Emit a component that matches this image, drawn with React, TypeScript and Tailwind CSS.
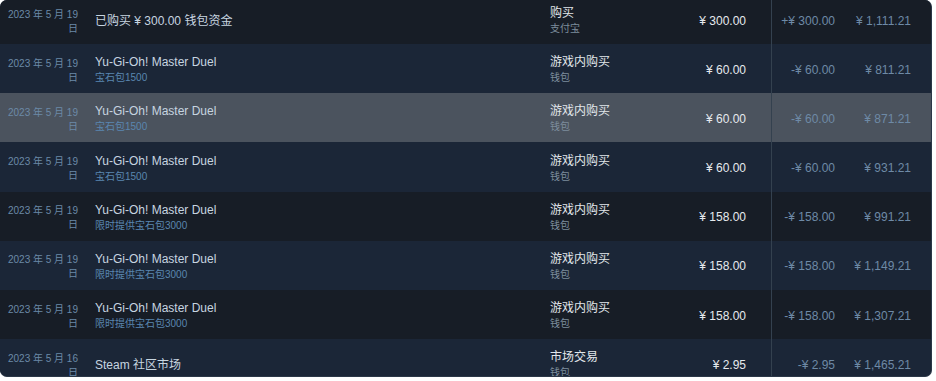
import React from "react";

type Row = {
  date: string;
  title: string;
  sub?: string;
  type: string;
  typeSub: string;
  total: string;
  change: string;
  balance: string;
};

const rows: Row[] = [
  { date: "2023 年 5 月 19 日", title: "已购买 ¥ 300.00 钱包资金", type: "购买", typeSub: "支付宝", total: "¥ 300.00", change: "+¥ 300.00", balance: "¥ 1,111.21" },
  { date: "2023 年 5 月 19 日", title: "Yu-Gi-Oh! Master Duel", sub: "宝石包1500", type: "游戏内购买", typeSub: "钱包", total: "¥ 60.00", change: "-¥ 60.00", balance: "¥ 811.21" },
  { date: "2023 年 5 月 19 日", title: "Yu-Gi-Oh! Master Duel", sub: "宝石包1500", type: "游戏内购买", typeSub: "钱包", total: "¥ 60.00", change: "-¥ 60.00", balance: "¥ 871.21" },
  { date: "2023 年 5 月 19 日", title: "Yu-Gi-Oh! Master Duel", sub: "宝石包1500", type: "游戏内购买", typeSub: "钱包", total: "¥ 60.00", change: "-¥ 60.00", balance: "¥ 931.21" },
  { date: "2023 年 5 月 19 日", title: "Yu-Gi-Oh! Master Duel", sub: "限时提供宝石包3000", type: "游戏内购买", typeSub: "钱包", total: "¥ 158.00", change: "-¥ 158.00", balance: "¥ 991.21" },
  { date: "2023 年 5 月 19 日", title: "Yu-Gi-Oh! Master Duel", sub: "限时提供宝石包3000", type: "游戏内购买", typeSub: "钱包", total: "¥ 158.00", change: "-¥ 158.00", balance: "¥ 1,149.21" },
  { date: "2023 年 5 月 19 日", title: "Yu-Gi-Oh! Master Duel", sub: "限时提供宝石包3000", type: "游戏内购买", typeSub: "钱包", total: "¥ 158.00", change: "-¥ 158.00", balance: "¥ 1,307.21" },
  { date: "2023 年 5 月 16 日", title: "Steam 社区市场", type: "市场交易", typeSub: "钱包", total: "¥ 2.95", change: "-¥ 2.95", balance: "¥ 1,465.21" },
];

export default function App() {
  return (
    <div className="w-[936px] h-[381px] bg-white">
      <div
        className="w-[932px] h-[377px] rounded-[7px] overflow-hidden bg-[#1b2637] border-r border-b border-[#2c3848]"
        style={{ fontFamily: '"Liberation Sans", Arial, "Noto Sans CJK SC", sans-serif' }}
      >
        <div className="mt-[-5px]">
          {rows.map((r, i) => {
            const bg = i === 2 ? "bg-[#4b535e]" : i % 2 === 0 ? "bg-[#171d26]" : "bg-[#1b2637]";
            return (
              <div key={i} className={`flex h-[49.17px] ${bg}`}>
                <div className="w-[80px] pl-[4px] pr-[2px] pt-[4px] flex items-center justify-end">
                  <div className="text-right text-[10px] leading-[14px] text-[#6b8aa8]">{r.date}</div>
                </div>
                <div className="w-[470px] pl-[15px] pt-[3px] flex flex-col justify-center">
                  <div className="text-[12px] leading-[16px] text-[#c7d5e0]">{r.title}</div>
                  {r.sub && <div className="text-[10px] leading-[16px] text-[#5a86b0]">{r.sub}</div>}
                </div>
                <div className="w-[110px] pt-[3px] flex flex-col justify-center">
                  <div className="text-[12px] leading-[16px] text-[#e1e6ea]">{r.type}</div>
                  <div className="text-[10px] leading-[16px] text-[#7d8d9c]">{r.typeSub}</div>
                </div>
                <div className="w-[111px] pr-[25px] pt-[2px] flex items-center justify-end text-[12px] text-[#e6eaee]">
                  {r.total}
                </div>
                <div className="w-[74px] pr-[10px] pt-[2px] border-l border-[#34414f] flex items-center justify-end text-[12px] text-[#6e8aa6]">
                  {r.change}
                </div>
                <div className="w-[76px] pr-[10px] pt-[2px] flex items-center justify-end text-[12px] text-[#6e8aa6]">
                  {r.balance}
                </div>
              </div>
            );
          })}
        </div>
      </div>
    </div>
  );
}
